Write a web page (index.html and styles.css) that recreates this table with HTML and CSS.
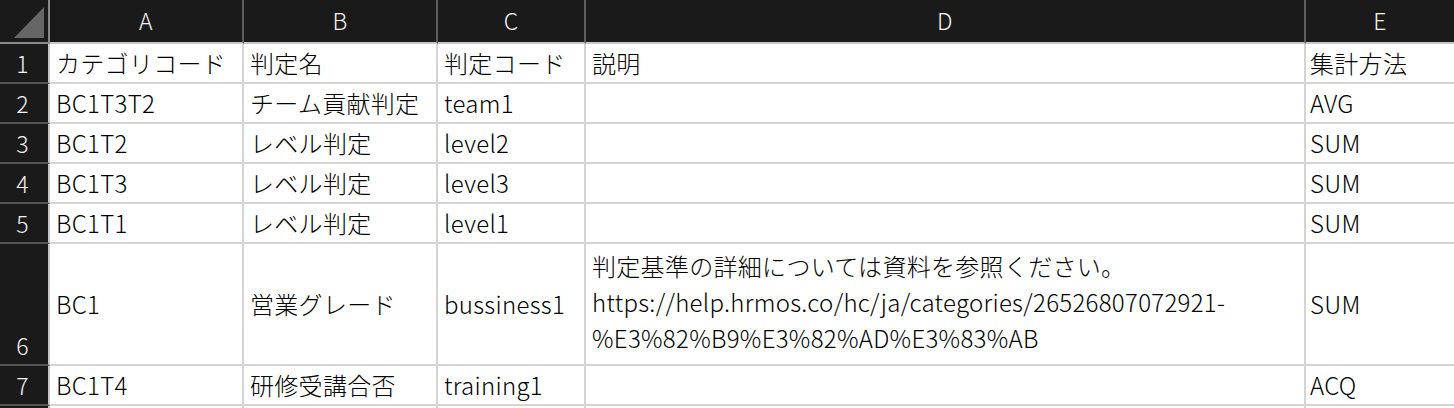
FILE: index.html
```html
<!DOCTYPE html>
<html lang="ja">
<head>
<meta charset="utf-8">
<link rel="stylesheet" href="styles.css">
</head>
<body>
<div class="sheet">
  <div class="corner"><span class="tri"></span></div>
  <div class="colhead">A</div>
  <div class="colhead">B</div>
  <div class="colhead">C</div>
  <div class="colhead">D</div>
  <div class="colhead last">E</div>

  <div class="rowhead">1</div>
  <div class="cell">カテゴリコード</div>
  <div class="cell">判定名</div>
  <div class="cell">判定コード</div>
  <div class="cell">説明</div>
  <div class="cell last">集計方法</div>

  <div class="rowhead">2</div>
  <div class="cell">BC1T3T2</div>
  <div class="cell">チーム貢献判定</div>
  <div class="cell">team1</div>
  <div class="cell"></div>
  <div class="cell last">AVG</div>

  <div class="rowhead">3</div>
  <div class="cell">BC1T2</div>
  <div class="cell">レベル判定</div>
  <div class="cell">level2</div>
  <div class="cell"></div>
  <div class="cell last">SUM</div>

  <div class="rowhead">4</div>
  <div class="cell">BC1T3</div>
  <div class="cell">レベル判定</div>
  <div class="cell">level3</div>
  <div class="cell"></div>
  <div class="cell last">SUM</div>

  <div class="rowhead">5</div>
  <div class="cell">BC1T1</div>
  <div class="cell">レベル判定</div>
  <div class="cell">level1</div>
  <div class="cell"></div>
  <div class="cell last">SUM</div>

  <div class="rowhead">6</div>
  <div class="cell">BC1</div>
  <div class="cell">営業グレード</div>
  <div class="cell">bussiness1</div>
  <div class="cell"><div class="lines">判定基準の詳細については資料を参照ください。<br>https://help.hrmos.co/hc/ja/categories/26526807072921-<br>%E3%82%B9%E3%82%AD%E3%83%AB</div></div>
  <div class="cell last">SUM</div>

  <div class="rowhead">7</div>
  <div class="cell">BC1T4</div>
  <div class="cell">研修受講合否</div>
  <div class="cell">training1</div>
  <div class="cell"></div>
  <div class="cell last">ACQ</div>

  <div class="rowhead"></div>
  <div class="cell"></div>
  <div class="cell"></div>
  <div class="cell"></div>
  <div class="cell"></div>
  <div class="cell last"></div>
</div>
</body>
</html>
```
FILE: styles.css
```css
html, body {
  margin: 0;
  padding: 0;
  background: #ffffff;
  overflow: hidden;
  height: 408px;
}
.sheet {
  display: grid;
  grid-template-columns: 50px 194px 194px 148px 720px 148px;
  grid-template-rows: 44px repeat(5, 40px) 122px 40px 40px;
  width: 1454px;
  height: 408px;
  overflow: hidden;
  font-family: "Noto Sans CJK JP", "Noto Sans", sans-serif;
  font-weight: 300;
  font-size: 24px;
  letter-spacing: 0.3px;
  color: #000000;
}
.corner {
  background: #1a1a1a;
  border-right: 2px solid #8a8a8a;
  border-bottom: 2px solid #8a8a8a;
  position: relative;
}
.tri {
  position: absolute;
  left: 14px;
  top: 7px;
  width: 30px;
  height: 31px;
  background: #666666;
  clip-path: polygon(100% 0, 100% 100%, 0 100%);
}
.colhead {
  background: #1a1a1a;
  color: #f2f2f2;
  border-right: 2px solid #5e5e5e;
  border-bottom: 2px solid #c8c8c8;
  display: flex;
  align-items: center;
  justify-content: center;
  font-size: 23px;
  line-height: 1;
  padding-bottom: 1px;
}
.colhead.last { border-right: none; }
.rowhead {
  background: #1a1a1a;
  color: #f2f2f2;
  border-right: 2px solid #c6c6c6;
  border-bottom: 2px solid #555555;
  display: flex;
  align-items: flex-end;
  justify-content: center;
  font-size: 23px;
  line-height: 38px;
  padding-right: 3px;
}
.cell {
  background: #ffffff;
  border-right: 2px solid #d4d4d4;
  border-bottom: 2px solid #d4d4d4;
  display: flex;
  align-items: center;
  padding-left: 6px;
  line-height: 1.2;
  white-space: nowrap;
  overflow: hidden;
}
.cell.last { border-right: none; padding-left: 4px; }
.lines {
  line-height: 36px;
  padding-bottom: 5px;
}
```
